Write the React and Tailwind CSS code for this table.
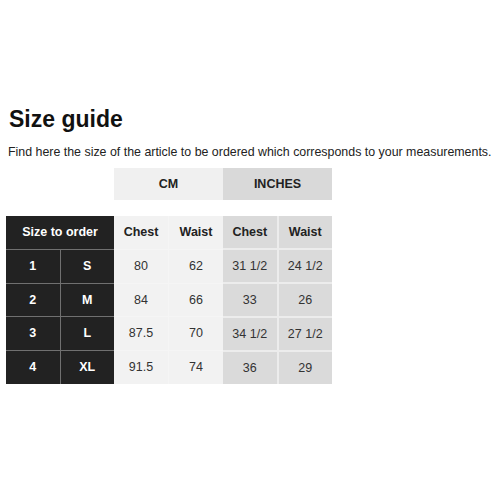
import React from "react";

const rows = [
  { n: "1", size: "S", cmChest: "80", cmWaist: "62", inChest: "31 1/2", inWaist: "24 1/2" },
  { n: "2", size: "M", cmChest: "84", cmWaist: "66", inChest: "33", inWaist: "26" },
  { n: "3", size: "L", cmChest: "87.5", cmWaist: "70", inChest: "34 1/2", inWaist: "27 1/2" },
  { n: "4", size: "XL", cmChest: "91.5", cmWaist: "74", inChest: "36", inWaist: "29" },
];

const Cell = ({ className = "", children }) => (
  <div className={`flex items-center justify-center ${className}`}>{children}</div>
);

const App = () => {
  return (
    <div className="w-[495px] h-[495px] bg-white font-['Liberation_Sans',Arial,sans-serif] text-[#222] overflow-hidden">
      <div className="pt-[105px] pl-[9px]">
        <h1 className="text-[23px] leading-[28px] font-bold text-[#111]">Size guide</h1>
      </div>
      <p className="mt-[11px] pl-[8px] text-[12.4px] leading-[16px] text-[#222] whitespace-nowrap">
        Find here the size of the article to be ordered which corresponds to your measurements.
      </p>

      <div className="mt-[8px] ml-[114px] flex h-[32px] text-[12.5px] font-bold">
        <Cell className="w-[109px] bg-[#f0f0f0]">CM</Cell>
        <Cell className="w-[109px] bg-[#d9d9d9]">INCHES</Cell>
      </div>

      <div className="mt-[16px] ml-[6px] flex h-[168px] text-[12.5px]">
        <div className="w-[108px] grid grid-cols-2 grid-rows-5 gap-px bg-[#707070] text-white font-bold">
          <Cell className="col-span-2 bg-[#222]">Size to order</Cell>
          {rows.map((r) => (
            <React.Fragment key={r.n}>
              <Cell className="bg-[#222]">{r.n}</Cell>
              <Cell className="bg-[#222]">{r.size}</Cell>
            </React.Fragment>
          ))}
        </div>

        <div className="w-[109px] grid grid-cols-2 grid-rows-5 gap-px bg-[#f5f5f5] text-[#333]">
          <Cell className="bg-[#f2f2f2] font-bold text-[#222]">Chest</Cell>
          <Cell className="bg-[#f2f2f2] font-bold text-[#222]">Waist</Cell>
          {rows.map((r) => (
            <React.Fragment key={r.n}>
              <Cell className="bg-[#f2f2f2]">{r.cmChest}</Cell>
              <Cell className="bg-[#f2f2f2]">{r.cmWaist}</Cell>
            </React.Fragment>
          ))}
        </div>

        <div className="w-[109px] grid grid-cols-2 grid-rows-5 gap-[2px] bg-[#ececec] text-[#333]">
          <Cell className="bg-[#dadada] font-bold text-[#222]">Chest</Cell>
          <Cell className="bg-[#dadada] font-bold text-[#222]">Waist</Cell>
          {rows.map((r) => (
            <React.Fragment key={r.n}>
              <Cell className="bg-[#dadada]">{r.inChest}</Cell>
              <Cell className="bg-[#dadada]">{r.inWaist}</Cell>
            </React.Fragment>
          ))}
        </div>
      </div>
    </div>
  );
};

export default App;
